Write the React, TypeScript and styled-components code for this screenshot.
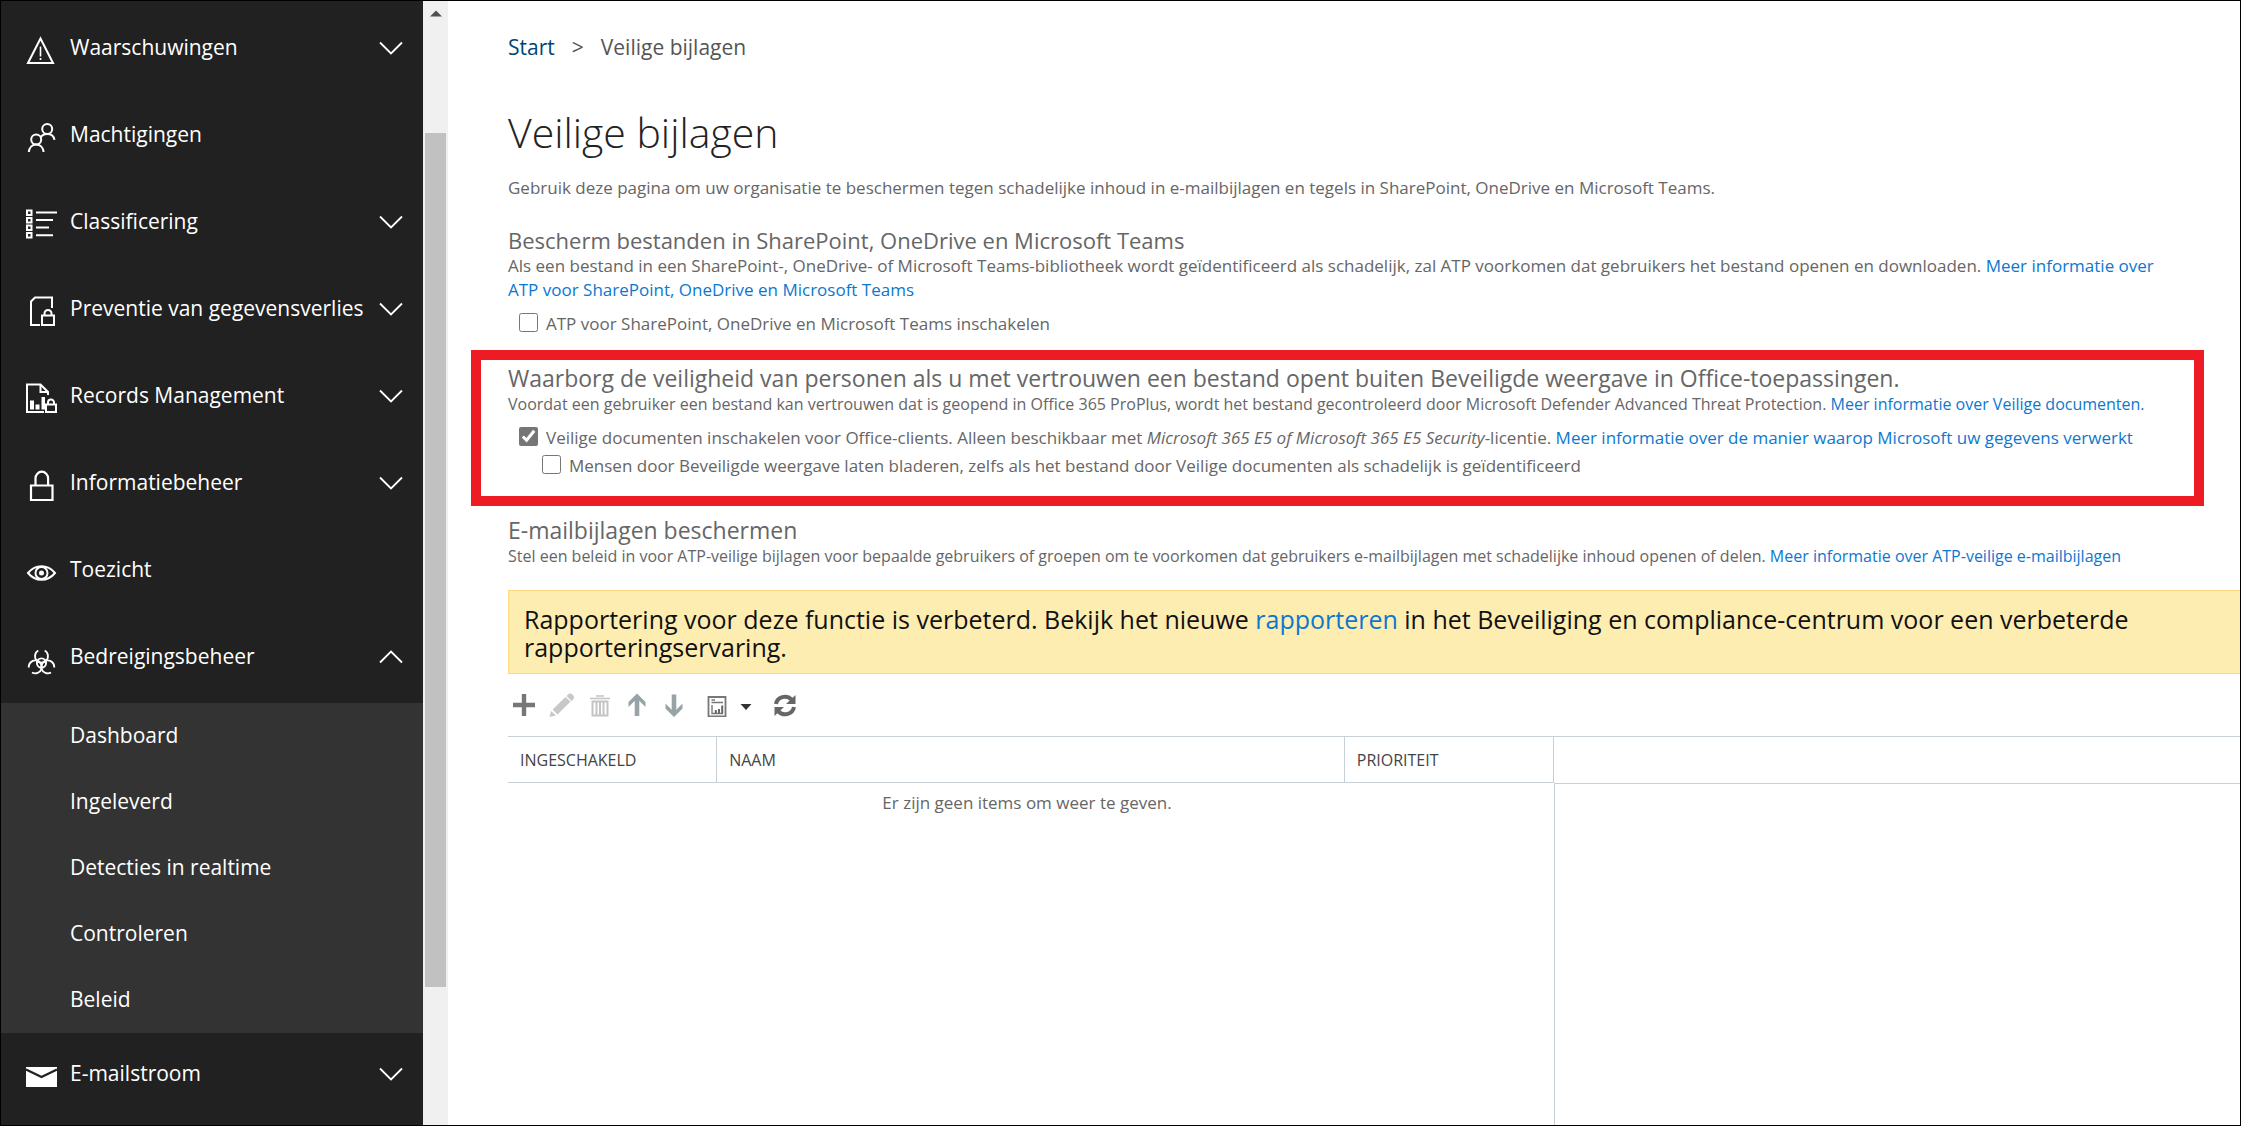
import React from "react";
import styled, { createGlobalStyle } from "styled-components";

const GlobalStyle = createGlobalStyle`
  *, *::before, *::after { box-sizing: border-box; }
  body { margin: 0; background: #fff; }
  body, button, input { font-family: "Open Sans", "Noto Sans", sans-serif; }
  h1, h2, p, ul, ol { margin: 0; padding: 0; }
  ul, ol { list-style: none; }
`;

const Page = styled.div`
  display: flex;
  min-height: 100vh;
  border: 1px solid #000;
  color: #666;
`;

const Sidebar = styled.nav`
  flex: none;
  width: 422px;
  padding-top: 6px;
  background: #212121;
`;

const NavButton = styled.button`
  display: flex;
  align-items: center;
  gap: 12px;
  width: 100%;
  height: 87px;
  padding: 0 20px 2px 25px;
  border: 0;
  background: none;
  color: #fff;
  font-size: 21px;
  line-height: 28px;
  text-align: left;
`;

const NavLabel = styled.span`
  flex: 1;
  padding-bottom: 6px;
  white-space: nowrap;
`;

const NavArrow = styled.span`
  display: flex;
  padding-bottom: 4px;
`;

const SubList = styled.ul`
  background: #333;
`;

const SubLink = styled.a`
  display: flex;
  align-items: center;
  height: 66px;
  padding: 0 20px 2px 69px;
  color: #fff;
  font-size: 21px;
  line-height: 28px;
  text-decoration: none;
`;

const ScrollTrack = styled.div`
  display: flex;
  flex: none;
  flex-direction: column;
  align-items: center;
  width: 25px;
  background: #f0f0f0;
`;

const ScrollArrow = styled.svg`
  flex: none;
  margin: 8px 0 116px;
`;

const ScrollThumb = styled.div`
  width: 21px;
  height: 76%;
  background: #c1c1c1;
`;

const Main = styled.main`
  display: flex;
  flex: 1;
  flex-direction: column;
  min-width: 0;
  padding: 32px 0 0 60px;
`;

const Breadcrumb = styled.ol`
  display: flex;
  gap: 17px;
  color: #555;
  font-size: 21px;
  line-height: 28px;
`;

const HomeLink = styled.a`
  color: #004578;
  text-decoration: none;
`;

const Title = styled.h1`
  margin-top: 43px;
  color: #222;
  font-size: 41px;
  font-weight: 300;
  line-height: 56px;
`;

const Text = styled.p<{ $compact?: boolean }>`
  font-size: ${(p) => (p.$compact ? "16px" : "17px")};
  line-height: 24px;
`;

const Intro = styled(Text)`
  margin-top: 16px;
`;

const Section = styled.section<{ $space: number }>`
  margin-top: ${(p) => p.$space}px;
  padding-right: 56px;
`;

const Highlight = styled.section`
  margin: 12px 36px 0 -37px;
  padding: 4px 20px 16px 27px;
  border: 10px solid #ed1c24;
`;

const Heading = styled.h2<{ $large?: boolean }>`
  font-size: ${(p) => (p.$large ? "23px" : "22px")};
  font-weight: 400;
  line-height: 28px;
`;

const Link = styled.a`
  color: #0b78d0;
  text-decoration: none;
`;

const Options = styled.div`
  margin-top: 8px;
`;

const Option = styled.div<{ $nested?: boolean }>`
  display: flex;
  align-items: center;
  gap: 8px;
  padding-left: ${(p) => (p.$nested ? 34 : 11)}px;
  font-size: 17px;
  line-height: 28px;
`;

const Checkbox = styled.input`
  flex: none;
  width: 19px;
  height: 19px;
  margin: 0 0 3px;
  accent-color: #767676;
`;

const Banner = styled.div`
  margin-top: 22px;
  padding: 14px 70px 12px 15px;
  border: 1px solid #fdd981;
  border-right: 0;
  background: #feedb1;
  color: #111;
  font-size: 25px;
  line-height: 28px;
`;

const Toolbar = styled.div`
  display: flex;
  align-items: center;
  gap: 13px;
  height: 62px;
  padding-left: 4px;
`;

const ToolButton = styled.button`
  display: flex;
  align-items: center;
  gap: 13px;
  padding: 0;
  border: 0;
  background: none;
`;

const MenuToolButton = styled(ToolButton)`
  margin: 0 8px;
`;

const ListArea = styled.div`
  display: grid;
  flex: 1;
  grid-template-columns: 1046fr 686fr;
`;

const Table = styled.table`
  width: 100%;
  align-self: start;
  border-collapse: separate;
  border-spacing: 0;
  table-layout: fixed;
`;

const HeadCell = styled.th<{ $width: number }>`
  width: ${(p) => p.$width}%;
  height: 47px;
  padding: 0 12px;
  border: 1px solid #c8d0d6;
  border-left: 0;
  color: #444;
  font-size: 16px;
  font-weight: 400;
  text-align: left;
`;

const EmptyCell = styled.td`
  padding: 8px 8px 8px 0;
  font-size: 17px;
  line-height: 24px;
  text-align: center;
`;

const Details = styled.aside`
  display: flex;
  flex-direction: column;
  border-top: 1px solid #c8d0d6;
`;

const DetailsHead = styled.div`
  height: 46px;
`;

const DetailsBody = styled.div`
  flex: 1;
  border-top: 1px solid #c8d0d6;
  border-left: 1px solid #c8d0d6;
`;

const navIcons: Record<string, React.ReactNode> = {
  warning: (
    <g fill="none" stroke="#fff" strokeWidth="2">
      <path d="M14.5 4.5 27 29H2Z" />
      <path d="M14.5 12.5v10M14.5 24v2" strokeWidth="1.6" />
    </g>
  ),
  people: (
    <g fill="none" stroke="#fff" strokeWidth="2">
      <circle cx="21.2" cy="8" r="5" />
      <circle cx="10.2" cy="18.5" r="5" />
      <path d="M14.5 16.5c1.4-2.4 3.8-3.6 6.7-3.6 4 0 6.8 2.4 7.3 6M2.8 31c.4-4.4 3.3-7.5 7.4-7.5s7 3.1 7.4 7.5" />
    </g>
  ),
  list: (
    <g fill="none" stroke="#fff" strokeWidth="2">
      <path d="M1 2.5h4.5V7H1ZM1 10h4.5v4.5H1ZM1 17.5h4.5V22H1ZM1 25h4.5v4.5H1Z" />
      <path d="M10 4.5h21M10 12h17M10 19.5h13M10 27.2h17" />
    </g>
  ),
  protect: (
    <g fill="none" stroke="#fff" strokeWidth="2">
      <path d="M14 30H5V6.5l4-4h17V13" />
      <path d="M16 20.5h12V30H16ZM18.500 20.500v-2a3.500 3.500 0 0 1 7 0v2" />
    </g>
  ),
  records: (
    <g fill="none" stroke="#fff" strokeWidth="2">
      <path d="M18 30H1V2.5h13.5L22 10v3M14.5 2.5V10H22" />
      <path d="M20 22.5h10V30H20ZM22 22.500v-2a3 3 0 0 1 6 0v2" />
      <path d="M4 18.5h4v9H4ZM9.500 22.500h4v5h-4ZM15.500 15h3.500v12.500h-3.500Z" fill="#fff" stroke="none" />
    </g>
  ),
  lock: (
    <g fill="none" stroke="#fff" strokeWidth="2.2">
      <path d="M5 16.5h21.500V31H5ZM9.500 16.500V9.500a6.300 6.800 0 0 1 12.600 0v7" />
    </g>
  ),
  eye: (
    <g fill="none" stroke="#fff" strokeWidth="2">
      <path d="M2 17c7.500-9 19.500-9 27 0-7.500 9-19.500 9-27 0Z" />
      <circle cx="15.5" cy="17" r="6" />
      <circle cx="15.5" cy="17" r="2.500" fill="#fff" stroke="none" />
    </g>
  ),
  hazard: (
    <g fill="none" stroke="#fff" strokeWidth="1.900">
      <path d="M12.300 7.500a6.500 6.500 0 1 0 6.400 0" />
      <path d="M2.800 24.500a6.500 6.500 0 1 1 3.200 5" />
      <path d="M28.200 24.500a6.500 6.500 0 1 0-3.200 5" />
      <circle cx="15.5" cy="20" r="4.600" />
    </g>
  ),
  mail: (
    <g>
      <path d="M0 7h31v20H0Z" fill="#fff" />
      <path d="m0 9.500 15.500 7.500L31 9.500" fill="none" stroke="#212121" strokeWidth="2.400" />
    </g>
  ),
};

type NavEntry = {
  label: string;
  icon: string;
  arrow?: "up" | "down";
  children?: string[];
};

const navItems: NavEntry[] = [
  { label: "Waarschuwingen", icon: "warning", arrow: "down" },
  { label: "Machtigingen", icon: "people" },
  { label: "Classificering", icon: "list", arrow: "down" },
  { label: "Preventie van gegevensverlies", icon: "protect", arrow: "down" },
  { label: "Records Management", icon: "records", arrow: "down" },
  { label: "Informatiebeheer", icon: "lock", arrow: "down" },
  { label: "Toezicht", icon: "eye" },
  {
    label: "Bedreigingsbeheer",
    icon: "hazard",
    arrow: "up",
    children: ["Dashboard", "Ingeleverd", "Detecties in realtime", "Controleren", "Beleid"],
  },
  { label: "E-mailstroom", icon: "mail", arrow: "down" },
];

function NavItem({ label, icon, arrow, children }: NavEntry) {
  return (
    <li>
      <NavButton type="button" aria-expanded={arrow ? arrow === "up" : undefined}>
        <svg width="32" height="32" viewBox="0 0 32 32" aria-hidden="true">
          {navIcons[icon]}
        </svg>
        <NavLabel>{label}</NavLabel>
        {arrow && (
          <NavArrow>
            <svg width="24" height="14" viewBox="0 0 24 14" aria-hidden="true">
              <path
                d={arrow === "down" ? "m1 1.500 11 11 11-11" : "m1 12.500 11-11 11 11"}
                fill="none"
                stroke="#fff"
                strokeWidth="1.800"
              />
            </svg>
          </NavArrow>
        )}
      </NavButton>
      {children && (
        <SubList>
          {children.map((child) => (
            <li key={child}>
              <SubLink href="#">{child}</SubLink>
            </li>
          ))}
        </SubList>
      )}
    </li>
  );
}

function ListToolbar() {
  return (
    <Toolbar role="toolbar" aria-label="Beleidsregels">
      <ToolButton type="button" aria-label="Toevoegen">
        <svg width="24" height="24" viewBox="0 0 24 24">
          <path d="M12 1v22M1 12h22" stroke="#777" strokeWidth="4.400" />
        </svg>
      </ToolButton>
      <ToolButton type="button" aria-label="Bewerken">
        <svg width="26" height="24" viewBox="0 0 26 24">
          <path d="M.500 24 2 18l5 4.500ZM3.500 16.500 16.500 4l5 4.500L8.500 21.500ZM17.500 3 19.500 1c2-2 7 1.500 5 5L22.500 8Z" fill="#c8c8c8" />
        </svg>
      </ToolButton>
      <ToolButton type="button" aria-label="Verwijderen">
        <svg width="24" height="24" viewBox="0 0 24 24">
          <path d="M2 5.500h20M8 3h8" stroke="#c4c4c4" strokeWidth="1.600" />
          <path d="M4.500 8.500h15v14h-15ZM8.500 8v14M12 8v14M15.500 8v14" fill="none" stroke="#c4c4c4" strokeWidth="2" />
        </svg>
      </ToolButton>
      <ToolButton type="button" aria-label="Omhoog">
        <svg width="24" height="24" viewBox="0 0 24 24">
          <path d="M12 23V4" stroke="#97a3a7" strokeWidth="4.600" />
          <path d="M12 .500 20.500 9v5L12 5.500 3.500 14V9Z" fill="#97a3a7" />
        </svg>
      </ToolButton>
      <ToolButton type="button" aria-label="Omlaag">
        <svg width="24" height="24" viewBox="0 0 24 24">
          <path d="M12 1.500V20" stroke="#97a3a7" strokeWidth="4.600" />
          <path d="M12 24 20.500 15.500v-5L12 19 3.500 10.500v5Z" fill="#97a3a7" />
        </svg>
      </ToolButton>
      <MenuToolButton type="button" aria-label="Rapporten">
        <svg width="20" height="24" viewBox="0 0 20 24">
          <path d="M1.500 4h17v19.500h-17Z" fill="none" stroke="#777" strokeWidth="1.800" />
          <path d="M4.500 7h3.500M4.500 9.500h11.500" stroke="#777" strokeWidth="1.400" />
          <path d="M5 12v8.500h11" fill="none" stroke="#777" strokeWidth="1.400" />
          <path d="M8.800 20.500V17M12 20.500v-4.500M15.200 20.500V12.500" fill="none" stroke="#666" strokeWidth="2" />
        </svg>
        <svg width="12" height="24" viewBox="0 0 12 24">
          <path d="M.500 11h11L6 17Z" fill="#333" />
        </svg>
      </MenuToolButton>
      <ToolButton type="button" aria-label="Vernieuwen">
        <svg width="24" height="24" viewBox="0 0 24 24">
          <path d="M3 11a9 8.500 0 0 1 15.500-4.500M21 14A9 8.500 0 0 1 5.500 18.500" fill="none" stroke="#666" strokeWidth="4" />
          <path d="M22.500 2v9H13ZM1.500 23v-9H11Z" fill="#666" />
        </svg>
      </ToolButton>
    </Toolbar>
  );
}

export default function App() {
  return (
    <>
      <GlobalStyle />
      <Page>
        <Sidebar aria-label="Navigatie">
          <ul>
            {navItems.map((item) => (
              <NavItem key={item.label} {...item} />
            ))}
          </ul>
        </Sidebar>
        <ScrollTrack aria-hidden="true">
          <ScrollArrow width="12" height="8" viewBox="0 0 12 8">
            <path d="M0 7.500 6 1.500l6 6Z" fill="#505050" />
          </ScrollArrow>
          <ScrollThumb />
        </ScrollTrack>
        <Main>
          <Breadcrumb>
            <li>
              <HomeLink href="#">Start</HomeLink>
            </li>
            <li aria-hidden="true">&gt;</li>
            <li>Veilige bijlagen</li>
          </Breadcrumb>
          <Title>Veilige bijlagen</Title>
          <Intro>
            Gebruik deze pagina om uw organisatie te beschermen tegen schadelijke inhoud in e-mailbijlagen en tegels in
            SharePoint, OneDrive en Microsoft Teams.
          </Intro>

          <Section $space={26}>
            <Heading>Bescherm bestanden in SharePoint, OneDrive en Microsoft Teams</Heading>
            <Text>
              Als een bestand in een SharePoint-, OneDrive- of Microsoft Teams-bibliotheek wordt geïdentificeerd als
              schadelijk, zal ATP voorkomen dat gebruikers het bestand openen en downloaden.{" "}
              <Link href="#">Meer informatie over ATP voor SharePoint, OneDrive en Microsoft Teams</Link>
            </Text>
            <Options>
              <Option>
                <Checkbox type="checkbox" id="atp" />
                <label htmlFor="atp">ATP voor SharePoint, OneDrive en Microsoft Teams inschakelen</label>
              </Option>
            </Options>
          </Section>

          <Highlight>
            <Heading $large>
              Waarborg de veiligheid van personen als u met vertrouwen een bestand opent buiten Beveiligde weergave in
              Office-toepassingen.
            </Heading>
            <Text $compact>
              Voordat een gebruiker een bestand kan vertrouwen dat is geopend in Office 365 ProPlus, wordt het bestand
              gecontroleerd door Microsoft Defender Advanced Threat Protection.{" "}
              <Link href="#">Meer informatie over Veilige documenten.</Link>
            </Text>
            <Options>
              <Option>
                <Checkbox type="checkbox" id="safe-docs" defaultChecked />
                <span>
                  <label htmlFor="safe-docs">
                    Veilige documenten inschakelen voor Office-clients. Alleen beschikbaar met{" "}
                    <em>Microsoft 365 E5 of Microsoft 365 E5 Security</em>-licentie.
                  </label>{" "}
                  <Link href="#">Meer informatie over de manier waarop Microsoft uw gegevens verwerkt</Link>
                </span>
              </Option>
              <Option $nested>
                <Checkbox type="checkbox" id="click-through" />
                <label htmlFor="click-through">
                  Mensen door Beveiligde weergave laten bladeren, zelfs als het bestand door Veilige documenten als
                  schadelijk is geïdentificeerd
                </label>
              </Option>
            </Options>
          </Highlight>

          <Section $space={10}>
            <Heading $large>E-mailbijlagen beschermen</Heading>
            <Text $compact>
              Stel een beleid in voor ATP-veilige bijlagen voor bepaalde gebruikers of groepen om te voorkomen dat
              gebruikers e-mailbijlagen met schadelijke inhoud openen of delen.{" "}
              <Link href="#">Meer informatie over ATP-veilige e-mailbijlagen</Link>
            </Text>
          </Section>

          <Banner>
            Rapportering voor deze functie is verbeterd. Bekijk het nieuwe <Link href="#">rapporteren</Link> in het
            Beveiliging en compliance-centrum voor een verbeterde rapporteringservaring.
          </Banner>

          <ListToolbar />

          <ListArea>
            <Table>
              <thead>
                <tr>
                  <HeadCell $width={20}>INGESCHAKELD</HeadCell>
                  <HeadCell $width={60}>NAAM</HeadCell>
                  <HeadCell $width={20}>PRIORITEIT</HeadCell>
                </tr>
              </thead>
              <tbody>
                <tr>
                  <EmptyCell colSpan={3}>Er zijn geen items om weer te geven.</EmptyCell>
                </tr>
              </tbody>
            </Table>
            <Details>
              <DetailsHead />
              <DetailsBody />
            </Details>
          </ListArea>
        </Main>
      </Page>
    </>
  );
}
